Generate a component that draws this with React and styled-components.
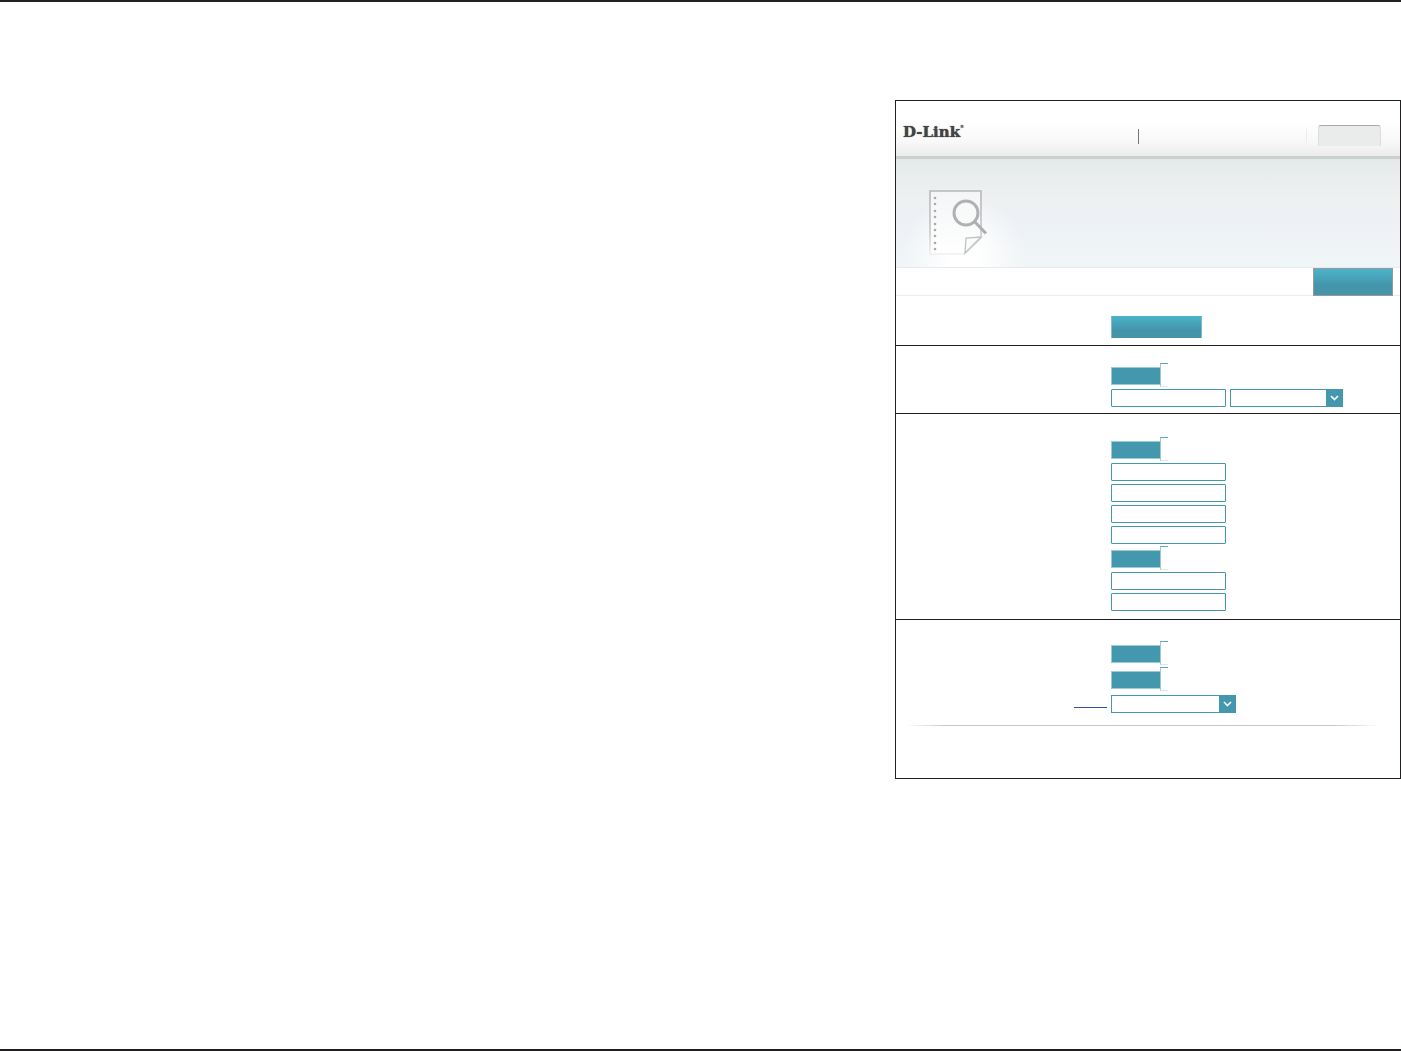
import React from 'react';
import styled, { createGlobalStyle } from 'styled-components';

const App = () => {
  return (
    <>
      <GlobalStyle />
      <Page>
        <Panel>
          <Header>
            <Logo href="#home">
              D-Link<sup>®</sup>
            </Logo>
            <TopNav>
              <TopLink href="#model" aria-label="Model" />
              <Divider />
              <LanguageButton type="button" aria-label="Language" />
            </TopNav>
          </Header>
          <Hero>
            <LogIcon />
          </Hero>
          <TabBar>
            <SaveButton type="button" aria-label="Save" />
          </TabBar>
          <form>
            <Section $top={20} $bottom={7}>
              <ActionButton type="button" aria-label="Check log" />
            </Section>
            <Section $top={17} $bottom={6}>
              <Toggle id="syslog" label="SysLog" />
              <Fields>
                <FieldRow>
                  <TextInput type="text" aria-label="SysLog server" />
                  <SelectBox id="computer" label="Computer name" width={113} />
                </FieldRow>
              </Fields>
            </Section>
            <Section $top={23} $bottom={8}>
              <Toggle id="email" label="Email notification" />
              <Fields>
                <TextInput type="text" aria-label="From address" />
                <TextInput type="text" aria-label="To address" />
                <TextInput type="text" aria-label="Server address" />
                <TextInput type="text" aria-label="Server port" />
              </Fields>
              <Toggle id="auth" label="Authentication" />
              <Fields>
                <TextInput type="text" aria-label="Account name" />
                <TextInput type="password" aria-label="Password" />
              </Fields>
            </Section>
            <Section $top={21} $bottom={10} $last>
              <Toggle id="full" label="Send when log is full" />
              <Toggle id="scheduled" label="Send on schedule" />
              <ScheduleRow>
                <ScheduleLink href="#schedule" aria-label="Schedule" />
                <SelectBox id="schedule" label="Schedule" width={125} />
              </ScheduleRow>
            </Section>
          </form>
          <Footer />
        </Panel>
      </Page>
    </>
  );
};

export default App;

const Toggle = ({ id, label }) => (
  <ToggleLabel htmlFor={id}>
    <ToggleInput id={id} type="checkbox" defaultChecked aria-label={label} />
    <ToggleKnob />
  </ToggleLabel>
);

const SelectBox = ({ id, label, width }) => (
  <SelectWrapper $width={width}>
    <Select id={id} aria-label={label} />
    <Arrow>
      <svg width="9" height="6" viewBox="0 0 9 6" fill="none" stroke="#fff" strokeWidth="1.6">
        <path d="M1 1l3.5 3.6L8 1" />
      </svg>
    </Arrow>
  </SelectWrapper>
);

const LogIcon = () => (
  <svg width="60" height="68" viewBox="0 0 60 68" fill="none">
    <defs>
      <linearGradient id="edge" x1="0" y1="0" x2="0" y2="66" gradientUnits="userSpaceOnUse">
        <stop offset="0" stopColor="#b4b6b7" />
        <stop offset="0.6" stopColor="#c3c5c6" />
        <stop offset="1" stopColor="#eff1f2" />
      </linearGradient>
      <linearGradient id="sheet" x1="0" y1="0" x2="0" y2="66" gradientUnits="userSpaceOnUse">
        <stop offset="0" stopColor="#f3f5f6" />
        <stop offset="1" stopColor="#fff" />
      </linearGradient>
    </defs>
    <path d="M1 2h51v47L36 65H1z" fill="url(#sheet)" stroke="url(#edge)" strokeWidth="1.6" />
    <path d="M52 48l-15 1-1 15z" fill="#fafbfb" stroke="#c0c2c3" strokeWidth="1.3" />
    {[9, 15, 22, 28, 35, 41, 47, 54, 60].map((y) => (
      <circle key={y} cx="6" cy={y} r="1.3" fill="#a9abac" />
    ))}
    <circle cx="37" cy="24" r="12" fill="#f8f9f9" stroke="#b0b1b2" strokeWidth="3" />
    <path d="M45.5 32.5l11.5 12" stroke="#adaeaf" strokeWidth="3" />
  </svg>
);

const GlobalStyle = createGlobalStyle`
  * {
    box-sizing: border-box;
  }

  body {
    margin: 0;
    background: #fff;
    font-family: 'Liberation Sans', sans-serif;
  }

  button,
  input,
  select {
    margin: 0;
    padding: 0;
    font: inherit;
  }
`;

const Page = styled.main`
  min-height: 100vh;
  padding-top: 98px;
  border-top: 2px solid #231f20;
  border-bottom: 2px solid #231f20;
`;

const Panel = styled.section`
  width: 100%;
  max-width: 506px;
  margin-left: auto;
  border: 1px solid #231f20;
`;

const Header = styled.header`
  display: flex;
  justify-content: space-between;
  padding: 24px 19px 10px 7px;
  background: linear-gradient(#fff 40%, #f8f8f8 75%, #ececec);
  border-bottom: 3px solid #cad0cf;
`;

const Logo = styled.a`
  color: #444;
  font-family: 'DejaVu Serif', serif;
  font-size: 15px;
  font-weight: bold;
  line-height: 14px;
  text-decoration: none;
  text-shadow: 0 0 1px #444;

  sup {
    font-size: 4px;
    line-height: 1;
    vertical-align: top;
  }
`;

const TopNav = styled.nav`
  display: flex;
  align-items: flex-start;
`;

const TopLink = styled.a`
  width: 168px;
  height: 15px;
  margin-top: 4px;
  border-left: 1px solid #777;
`;

const Divider = styled.span`
  width: 1px;
  height: 14px;
  margin: 4px 11px 0 0;
  background: #ececec;
`;

const LanguageButton = styled.button`
  width: 63px;
  height: 21px;
  background: #eaeceb;
  border: 1px solid #dcdedd;
  border-top-color: #aaa;
  border-bottom: 0;
  border-radius: 3px 3px 0 0;
`;

const Hero = styled.div`
  height: 109px;
  padding: 30px 33px 0;
  background:
    radial-gradient(circle at 68px 98px, #fff 14px, rgba(255, 255, 255, 0) 62px),
    linear-gradient(#e5e8e9, #e8edee 15%, #eef0f0 35%, #edf1f5 55%, #f0f5f7);
  border-bottom: 1px solid #e6eaec;
`;

const TabBar = styled.div`
  display: flex;
  justify-content: flex-end;
  height: 28px;
  padding-right: 7px;
  border-bottom: 1px solid #ececec;
`;

const SaveButton = styled.button`
  width: 80px;
  height: 28px;
  background: linear-gradient(#4bb3cb, #4494aa 65%, #4494aa);
  border: 1px solid #999;
`;

const Section = styled.div`
  display: flex;
  flex-direction: column;
  align-items: flex-start;
  gap: 2px;
  padding: ${({ $top, $bottom }) => `${$top}px 0 ${$bottom}px 215px`};
  border-bottom: ${({ $last }) => ($last ? '0' : '1px solid #231f20')};
`;

const ActionButton = styled.button`
  width: 91px;
  height: 22px;
  background: linear-gradient(#4bb3cb, #4494aa 65%, #4494aa);
  border: 0;
  border-left: 1px solid #7fbccb;
  border-right: 1px solid #7fbccb;
`;

const ToggleLabel = styled.label`
  display: flex;
  align-items: flex-end;
  height: 24px;
`;

const ToggleInput = styled.input`
  appearance: none;
  width: 49px;
  height: 18px;
  margin-bottom: 2px;
  background: #4398ad;
  border: 1px solid #9ccad5;
  border-right: 0;
`;

const ToggleKnob = styled.span`
  width: 8px;
  height: 24px;
  border-top: 1px solid #5ba5b7;
  border-left: 1px solid #9ccad5;
  border-bottom: 1px solid #d8eaee;
`;

const Fields = styled.div`
  display: flex;
  flex-direction: column;
  gap: 3px;
`;

const FieldRow = styled.div`
  display: flex;
  gap: 4px;
`;

const TextInput = styled.input`
  width: 115px;
  height: 18px;
  background: #fff;
  border: 1px solid #4398ad;
  border-radius: 1px;
`;

const SelectWrapper = styled.div`
  display: flex;
  width: ${({ $width }) => $width}px;
  height: 18px;
  border: 1px solid #4398ad;
`;

const Select = styled.select`
  appearance: none;
  flex: 1;
  min-width: 0;
  background: #fff;
  border: 0;
`;

const Arrow = styled.span`
  display: flex;
  align-items: center;
  justify-content: center;
  width: 16px;
  background: #4398ad;
`;

const ScheduleRow = styled.div`
  display: flex;
  align-items: center;
  gap: 4px;
  height: 22px;
  margin-left: -37px;
`;

const ScheduleLink = styled.a`
  width: 33px;
  height: 6px;
  margin-top: 2px;
  border-bottom: 1px solid #2f4fa2;
`;

const Footer = styled.footer`
  height: 53px;
  margin: 0 20px 0 11px;
  border-top: 1px solid;
  border-image: linear-gradient(to right, transparent, #c8c8c8 8%, #c8c8c8 90%, transparent) 1;
`;
